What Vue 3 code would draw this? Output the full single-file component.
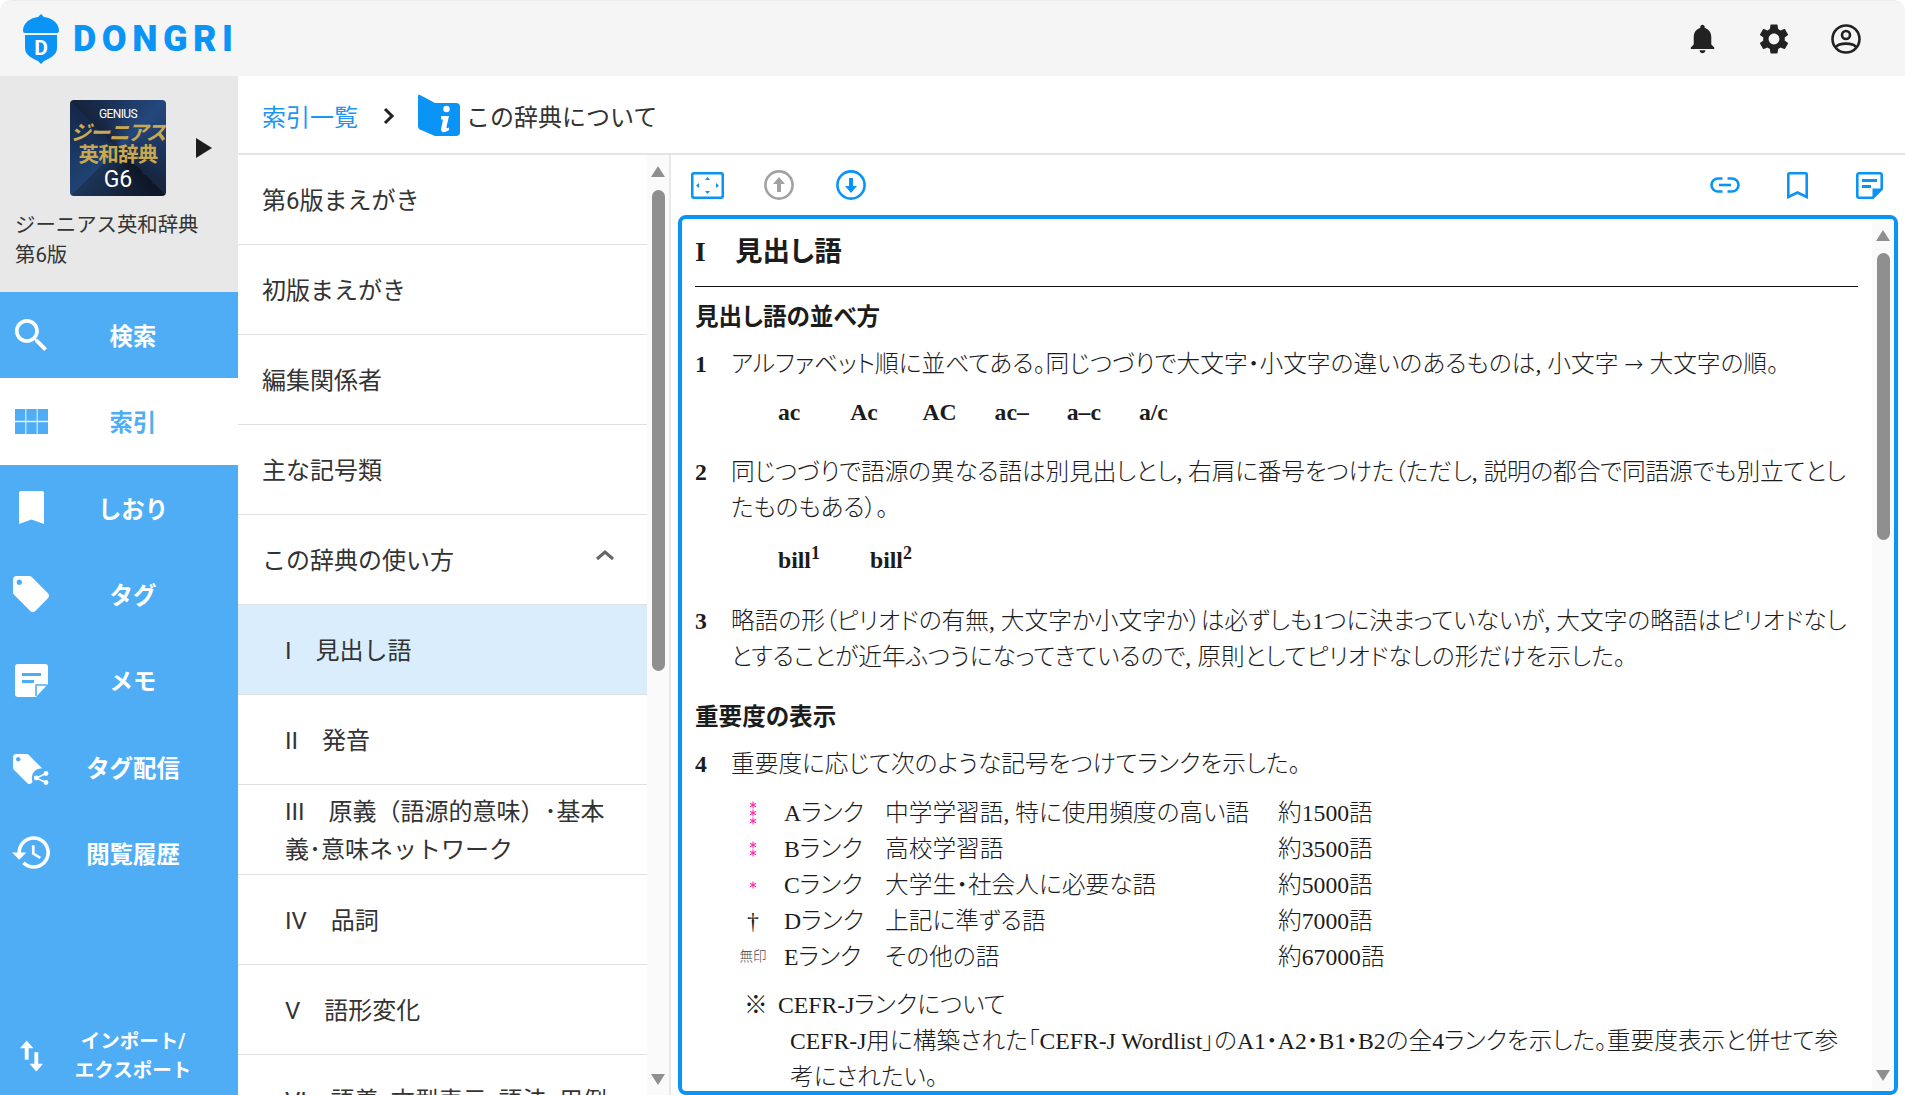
<template>
  <div class="app">
    <header class="topbar">
      <div class="logo">
        <svg class="logo-mark" viewBox="0 0 38 50">
          <path d="M1 17C1 8 9 4 16 3L19 0L22 3C29 4 37 8 37 17Q37 19 35 19H3Q1 19 1 17Z" />
          <path d="M3 21H35V34C35 42 26 45 22 47L19 50L16 47C12 45 3 42 3 34Z" />
          <text x="19" y="41" text-anchor="middle" class="logo-d">D</text>
        </svg>
        <span class="logo-text">DONGRI</span>
      </div>
      <div class="top-icons">
        <button class="top-btn">
          <svg class="bell" viewBox="3.5 2 17 20.5"><path d="M12 22c1.1 0 2-.9 2-2h-4c0 1.1.89 2 2 2zm6-6v-5c0-3.07-1.64-5.64-4.5-6.32V4c0-.83-.67-1.5-1.5-1.5s-1.5.67-1.5 1.5v.68C7.63 5.36 6 7.92 6 11v5l-2 2v1h16v-1l-2-2z" /></svg>
        </button>
        <button class="top-btn">
          <svg viewBox="2 2 20 20"><path d="M19.14 12.94c.04-.3.06-.61.06-.94 0-.32-.02-.64-.07-.94l2.03-1.58c.18-.14.23-.41.12-.61l-1.92-3.32c-.12-.22-.37-.29-.59-.22l-2.39.96c-.5-.38-1.03-.7-1.62-.94l-.36-2.54c-.04-.24-.24-.41-.48-.41h-3.84c-.24 0-.43.17-.47.41l-.36 2.54c-.59.24-1.13.57-1.62.94l-2.39-.96c-.22-.08-.47 0-.59.22L2.74 8.87c-.12.21-.08.47.12.61l2.03 1.58c-.05.3-.09.63-.09.94s.02.64.07.94l-2.03 1.58c-.18.14-.23.41-.12.61l1.92 3.32c.12.22.37.29.59.22l2.39-.96c.5.38 1.03.7 1.62.94l.36 2.54c.05.24.24.41.48.41h3.84c.24 0 .44-.17.47-.41l.36-2.54c.59-.24 1.13-.56 1.62-.94l2.39.96c.22.08.47 0 .59-.22l1.92-3.32c.12-.22.07-.47-.12-.61l-2.01-1.58zM12 15.6c-1.98 0-3.6-1.62-3.6-3.6s1.62-3.6 3.6-3.6 3.6 1.62 3.6 3.6-1.62 3.6-3.6 3.6z" /></svg>
        </button>
        <button class="top-btn">
          <svg viewBox="0 0 30 30" class="line-icon">
            <circle cx="15" cy="15" r="13.5" />
            <circle cx="15" cy="11" r="4" />
            <path d="M5 23C8 18.5 22 18.5 25 23" />
          </svg>
        </button>
      </div>
    </header>

    <div class="body">
      <aside class="sidebar">
        <div class="book">
          <div class="book-top">
            <div class="cover">
              <span class="cover-en">GENIUS</span>
              <span class="cover-ja slant">ジーニアス</span>
              <span class="cover-ja">英和辞典</span>
              <span class="cover-g6">G6</span>
            </div>
            <span class="book-arrow"></span>
          </div>
          <p class="book-name">ジーニアス英和辞典<br />第6版</p>
        </div>

        <nav class="nav">
          <a class="nav-item">
            <svg class="nav-icon search" viewBox="3 3 18 18"><path d="M15.5 14h-.79l-.28-.27C15.41 12.59 16 11.11 16 9.5 16 5.91 13.09 3 9.5 3S3 5.91 3 9.5 5.91 16 9.5 16c1.61 0 3.09-.59 4.23-1.57l.27.28v.79l5 4.99L20.49 19l-4.99-5zm-6 0C7.01 14 5 11.99 5 9.5S7.01 5 9.5 5 14 7.01 14 9.5 11.99 14 9.5 14z" /></svg>
            <span>検索</span>
          </a>
          <a class="nav-item active">
            <svg class="nav-icon grid" viewBox="0 0 33 25">
              <rect x="0" y="0" width="10.4" height="11.8" />
              <rect x="11.3" y="0" width="10.4" height="11.8" />
              <rect x="22.6" y="0" width="10.4" height="11.8" />
              <rect x="0" y="13.2" width="10.4" height="11.8" />
              <rect x="11.3" y="13.2" width="10.4" height="11.8" />
              <rect x="22.6" y="13.2" width="10.4" height="11.8" />
            </svg>
            <span>索引</span>
          </a>
          <a class="nav-item">
            <svg class="nav-icon mark" viewBox="0 0 25 33"><path d="M2 0H23a2 2 0 0 1 2 2V33L12.5 28.5L0 33V2a2 2 0 0 1 2-2Z" /></svg>
            <span>しおり</span>
          </a>
          <a class="nav-item">
            <svg class="nav-icon tag" viewBox="2 2 20 20"><path d="M21.41 11.58l-9-9C12.05 2.22 11.55 2 11 2H4c-1.1 0-2 .9-2 2v7c0 .55.22 1.05.59 1.42l9 9c.36.36.86.58 1.41.58.55 0 1.05-.22 1.41-.59l7-7c.37-.36.59-.86.59-1.41 0-.55-.23-1.06-.59-1.42zM5.5 7C4.67 7 4 6.33 4 5.5S4.67 4 5.5 4 7 4.67 7 5.5 6.33 7 5.5 7z" /></svg>
            <span>タグ</span>
          </a>
          <a class="nav-item">
            <svg class="nav-icon memo" viewBox="0 0 33 33">
              <path d="M3 0H30a3 3 0 0 1 3 3V20L21 33H3a3 3 0 0 1-3-3V3a3 3 0 0 1 3-3Z" />
              <rect class="cut" x="7" y="9" width="19" height="3" />
              <rect class="cut" x="7" y="16" width="12" height="3" />
              <path class="fold" d="M21 32V21H32" />
            </svg>
            <span>メモ</span>
          </a>
          <a class="nav-item">
            <svg class="nav-icon tagshare" viewBox="2 2 24 22">
              <path d="M21.41 11.58l-9-9C12.05 2.22 11.55 2 11 2H4c-1.1 0-2 .9-2 2v7c0 .55.22 1.05.59 1.42l9 9c.36.36.86.58 1.41.58.55 0 1.05-.22 1.41-.59l7-7c.37-.36.59-.86.59-1.41 0-.55-.23-1.06-.59-1.42zM5.5 7C4.67 7 4 6.33 4 5.5S4.67 4 5.5 4 7 4.67 7 5.5 6.33 7 5.5 7z" />
              <circle class="cut" cx="21" cy="18" r="6.5" />
              <circle cx="17.5" cy="18" r="1.6" />
              <circle cx="24" cy="15" r="1.6" />
              <circle cx="24" cy="21" r="1.6" />
              <path class="share" d="M24 15L17.5 18L24 21" />
            </svg>
            <span>タグ配信</span>
          </a>
          <a class="nav-item">
            <svg class="nav-icon hist" viewBox="1 3 21 18"><path d="M13 3c-4.97 0-9 4.03-9 9H1l3.89 3.89.07.14L9 12H6c0-3.87 3.13-7 7-7s7 3.13 7 7-3.13 7-7 7c-1.93 0-3.68-.79-4.94-2.06l-1.42 1.42C8.27 19.99 10.51 21 13 21c4.97 0 9-4.03 9-9s-4.03-9-9-9zm-1 5v5l4.28 2.54.72-1.21-3.5-2.08V8H12z" /></svg>
            <span>閲覧履歴</span>
          </a>
          <a class="nav-item bottom">
            <svg class="nav-icon swap" viewBox="0 0 26 32">
              <path d="M8 0L15 8H10V20H6V8H1Z" />
              <path d="M18 32L25 24H20V12H16V24H11Z" />
            </svg>
            <span>インポート/<br />エクスポート</span>
          </a>
        </nav>
      </aside>

      <main class="main">
        <div class="crumbs">
          <a class="crumb-link">索引一覧</a>
          <svg class="crumb-sep" viewBox="0 0 12 18"><path d="M2 2L9 9L2 16" /></svg>
          <svg class="crumb-icon" viewBox="0 0 42 42">
            <path d="M0 2Q0 0 2 1L17 9V42L3 36Q0 35 0 32Z" />
            <path d="M17 9H38a4 4 0 0 1 4 4V38a4 4 0 0 1-4 4H17Z" />
            <circle class="white" cx="28.5" cy="15" r="3.2" />
            <path class="white" d="M23 22H31L28.5 33Q28 35 31 33.5V36Q25 40 23.5 37Q22.8 36 23.3 34L25 25.5H23Z" />
          </svg>
          <span class="crumb-now">この辞典について</span>
        </div>

        <div class="panes">
          <section class="list-pane">
            <ul class="rows">
              <li
                v-for="row in rows"
                :key="row.label"
                class="row"
                :class="{ sub: row.sub, selected: row.selected, open: row.open, single: row.single }"
              >
                <span>{{ row.label }}</span>
                <svg v-if="row.open" class="chev" viewBox="0 0 20 12"><path d="M2 10L10 3L18 10" /></svg>
              </li>
            </ul>
            <div class="sbar">
              <span class="sbar-up"></span>
              <span class="sbar-thumb list-thumb"></span>
              <span class="sbar-down"></span>
            </div>
          </section>

          <section class="doc-pane">
            <div class="tools">
              <button class="tool">
                <svg class="w33" viewBox="0 0 33 27">
                  <rect class="stroke" x="1.2" y="1.2" width="30.6" height="24.6" rx="2" />
                  <path class="fill" d="M16.5 5L19 8H14ZM16.5 22L14 19H19ZM5 13.5L8 11V16ZM28 13.5L25 16V11Z" />
                </svg>
              </button>
              <button class="tool">
                <svg class="w30" viewBox="0 0 30 30">
                  <circle class="stroke gray" cx="15" cy="15" r="13.6" />
                  <path class="fill gray" d="M15 7L21 14H17V22H13V14H9Z" />
                </svg>
              </button>
              <button class="tool">
                <svg class="w30" viewBox="0 0 30 30">
                  <circle class="stroke" cx="15" cy="15" r="13.6" />
                  <path class="fill" d="M15 23L9 16H13V8H17V16H21Z" />
                </svg>
              </button>
              <div class="tools-gap"></div>
              <button class="tool">
                <svg class="w30" viewBox="0 0 30 16">
                  <path class="stroke" d="M12.5 1.5H8a6.5 6.5 0 0 0 0 13H12.5" />
                  <path class="stroke" d="M17.5 1.5H22a6.5 6.5 0 0 1 0 13H17.5" />
                  <path class="stroke" d="M9 8H21" />
                </svg>
              </button>
              <button class="tool">
                <svg class="w21" viewBox="0 0 21 27">
                  <path class="stroke" d="M1.3 2.3a1 1 0 0 1 1-1H18.7a1 1 0 0 1 1 1V25L10.5 20.5L1.3 25Z" />
                </svg>
              </button>
              <button class="tool">
                <svg class="w27" viewBox="0 0 27 27">
                  <path class="stroke" d="M1.3 3a1.7 1.7 0 0 1 1.7-1.7H24a1.7 1.7 0 0 1 1.7 1.7V17L17 25.7H3a1.7 1.7 0 0 1-1.7-1.7Z" />
                  <rect class="fill" x="6" y="7" width="15" height="3" />
                  <rect class="fill" x="6" y="13" width="9" height="3" />
                  <path class="fill" d="M16.5 16.5H26.5L16.5 26.5Z" />
                </svg>
              </button>
            </div>

            <div class="frame">
              <article class="doc">
                <h1 class="doc-title"><b class="latin">I</b><span>見出し語</span></h1>

                <h2 class="doc-h2">見出し語の並べ方</h2>
                <div class="para first"><b class="num">1</b><p>アルファベット順に並べてある。同じつづりで大文字・小文字の違いのあるものは, 小文字 <span class="arrow">→</span> 大文字の順。</p></div>
                <div class="samples">
                  <b>ac</b><b>Ac</b><b>AC</b><b>ac–</b><b>a–c</b><b>a/c</b>
                </div>
                <div class="para second"><b class="num">2</b><p class="tight">同じつづりで語源の異なる語は別見出しとし, 右肩に番号をつけた（ただし, 説明の都合で同語源でも別立てとし<br />たものもある）。</p></div>
                <div class="bills">
                  <b>bill<sup>1</sup></b><b>bill<sup>2</sup></b>
                </div>
                <div class="para third"><b class="num">3</b><p>略語の形（ピリオドの有無, 大文字か小文字か）は必ずしも1つに決まっていないが, 大文字の略語はピリオドなし<br />とすることが近年ふつうになってきているので, 原則としてピリオドなしの形だけを示した。</p></div>

                <h2 class="doc-h2 lower">重要度の表示</h2>
                <div class="para fourth"><b class="num">4</b><p>重要度に応じて次のような記号をつけてランクを示した。</p></div>
                <div class="ranks">
                  <div v-for="r in ranks" :key="r.name" class="rank">
                    <span class="rank-mark">
                      <svg v-for="n in r.stars" :key="n" class="star" viewBox="0 0 8 8">
                        <path d="M4 .5V7.5M1 2.2L7 5.8M7 2.2L1 5.8" />
                      </svg>
                      <span v-if="r.mark" :class="r.small ? 'mark-small' : ''">{{ r.mark }}</span>
                    </span>
                    <span>{{ r.name }}</span>
                    <span>{{ r.desc }}</span>
                    <span>{{ r.count }}</span>
                  </div>
                </div>
                <div class="note">
                  <p><span class="note-mark">※</span>CEFR-Jランクについて</p>
                  <p class="note-body">CEFR-J用に構築された「CEFR-J Wordlist」のA1・A2・B1・B2の全4ランクを示した。重要度表示と併せて参<br />考にされたい。</p>
                </div>
              </article>
              <div class="sbar doc-sbar">
                <span class="sbar-up"></span>
                <span class="sbar-thumb doc-thumb"></span>
                <span class="sbar-down"></span>
              </div>
            </div>
          </section>
        </div>
      </main>
    </div>
  </div>
</template>

<script setup>
const rows = [
  { label: '第6版まえがき' },
  { label: '初版まえがき' },
  { label: '編集関係者' },
  { label: '主な記号類' },
  { label: 'この辞典の使い方', open: true },
  { label: 'I　見出し語', sub: true, selected: true },
  { label: 'II　発音', sub: true },
  { label: 'III　原義（語源的意味）･基本義･意味ネットワーク', sub: true },
  { label: 'IV　品詞', sub: true },
  { label: 'V　語形変化', sub: true },
  { label: 'VI　語義･文型表示･語法･用例', sub: true, single: true }
]

const ranks = [
  { stars: 3, name: 'Aランク', desc: '中学学習語, 特に使用頻度の高い語', count: '約1500語' },
  { stars: 2, name: 'Bランク', desc: '高校学習語', count: '約3500語' },
  { stars: 1, name: 'Cランク', desc: '大学生・社会人に必要な語', count: '約5000語' },
  { stars: 0, mark: '†', name: 'Dランク', desc: '上記に準ずる語', count: '約7000語' },
  { stars: 0, mark: '無印', small: true, name: 'Eランク', desc: 'その他の語', count: '約67000語' }
]
</script>

<style>
html,
body {
  margin: 0;
  background: #fff;
}
</style>

<style scoped>
.app {
  width: 1905px;
  height: 1095px;
  overflow: hidden;
  display: flex;
  flex-direction: column;
  font-family: Roboto, "Noto Sans CJK JP", sans-serif;
  color: #333;
}

/* top bar */
.topbar {
  height: 76px;
  flex: none;
  box-sizing: border-box;
  background: #f5f5f5;
  border-top: 1px solid #ececec;
  border-radius: 12px 12px 0 0;
  display: flex;
  align-items: center;
  justify-content: space-between;
}

.logo {
  display: flex;
  align-items: center;
  padding-left: 22px;
  gap: 13px;
}

.logo-mark {
  width: 38px;
  height: 50px;
  fill: #0a94f5;
}

.logo-d {
  fill: #fff;
  font: 700 21px Roboto, sans-serif;
}

.logo-text {
  font: 900 36px Roboto, sans-serif;
  letter-spacing: 5.5px;
  color: #0a94f5;
}

.top-icons {
  display: flex;
  padding-right: 23px;
}

.top-btn {
  width: 72px;
  height: 72px;
  padding: 0;
  border: 0;
  background: none;
  display: flex;
  align-items: center;
  justify-content: center;
}

.top-btn svg {
  width: 30px;
  height: 30px;
  fill: #222;
}

.top-btn svg.bell {
  width: 25px;
  height: 30px;
}

.top-btn svg.line-icon {
  fill: none;
  stroke: #222;
  stroke-width: 2.6;
}

.body {
  flex: 1;
  min-height: 0;
  display: flex;
}

/* left sidebar */
.sidebar {
  width: 238px;
  flex: none;
  display: flex;
  flex-direction: column;
  background: #4fadf6;
}

.book {
  height: 216px;
  flex: none;
  background: #e8e8e8;
  box-sizing: border-box;
  padding-top: 24px;
}

.book-top {
  display: flex;
  align-items: center;
  padding-left: 70px;
  gap: 30px;
}

.cover {
  width: 96px;
  height: 96px;
  border-radius: 4px;
  display: flex;
  flex-direction: column;
  align-items: center;
  overflow: hidden;
  white-space: nowrap;
  color: #fff;
  background: conic-gradient(from 45deg, #24477c, #16243f 25%, #0e1626 25%, #1d3558 50%, #1f4374 50%, #16284a 75%, #16233c 75%, #24477c);
}

.cover-en {
  font-size: 12px;
  line-height: 14px;
  margin-top: 7px;
  margin-bottom: 1px;
  letter-spacing: -0.6px;
}

.cover-ja {
  font-weight: 700;
  font-size: 20.5px;
  line-height: 22px;
  color: #c9a84f;
  letter-spacing: -0.8px;
  font-feature-settings: "palt";
}

.cover-ja.slant {
  font-style: italic;
}

.cover-g6 {
  font-size: 23px;
  line-height: 26px;
  margin-top: 1px;
}

.book-arrow {
  width: 0;
  height: 0;
  border-left: 16px solid #1c1c1c;
  border-top: 10px solid transparent;
  border-bottom: 10px solid transparent;
}

.book-name {
  margin: 14px 0 0 15px;
  font-size: 20.4px;
  line-height: 30px;
  color: #333;
}

.nav {
  flex: 1;
  min-height: 0;
  display: flex;
  flex-direction: column;
}

.nav-item {
  height: 86.3px;
  flex: none;
  display: grid;
  grid-template-columns: 62px 1fr;
  align-items: center;
  padding-right: 34px;
  color: #fff;
  font-size: 23.4px;
  font-weight: 700;
  text-align: center;
}

.nav-item.active {
  background: #fff;
  color: #4fadf6;
}

.nav-item.bottom {
  margin-top: auto;
  height: 78px;
  font-size: 19.5px;
  line-height: 29px;
}

.nav-icon {
  justify-self: center;
  fill: #fff;
}

.search {
  width: 33px;
  height: 33px;
}

.grid {
  width: 33px;
  height: 25px;
  fill: #4fadf6;
}

.mark {
  width: 25px;
  height: 33px;
}

.tag {
  width: 36px;
  height: 36px;
}

.memo {
  width: 33px;
  height: 33px;
}

.memo .cut {
  fill: #4fadf6;
}

.memo .fold {
  fill: none;
  stroke: #4fadf6;
  stroke-width: 1.6;
}

.tagshare {
  width: 36px;
  height: 33px;
  margin-top: 8px;
}

.tagshare .cut {
  fill: #4fadf6;
}

.tagshare .share {
  fill: none;
  stroke: #fff;
  stroke-width: 1;
}

.hist {
  width: 38px;
  height: 33px;
}

.swap {
  width: 25px;
  height: 32px;
}

/* main area */
.main {
  flex: 1;
  min-width: 0;
  display: flex;
  flex-direction: column;
}

.crumbs {
  height: 79px;
  flex: none;
  box-sizing: border-box;
  border-bottom: 2px solid #e4e4e4;
  display: flex;
  align-items: center;
  padding: 2px 0 0 24px;
  font-size: 24px;
}

.crumb-link {
  color: #1e96f0;
}

.crumb-sep {
  width: 12px;
  height: 18px;
  margin-left: 25px;
  fill: none;
  stroke: #222;
  stroke-width: 3;
}

.crumb-icon {
  width: 42px;
  height: 42px;
  margin-left: 23px;
  margin-top: -2px;
  fill: #0a94f5;
}

.crumb-icon .white {
  fill: #fff;
}

.crumb-now {
  margin-left: 6px;
  color: #333;
}

.panes {
  flex: 1;
  min-height: 0;
  display: flex;
}

/* list pane */
.list-pane {
  width: 433px;
  flex: none;
  box-sizing: border-box;
  border-right: 2px solid #e8e8e8;
  display: flex;
  min-height: 0;
}

.rows {
  width: 409px;
  flex: none;
  margin: 0;
  padding: 0;
  list-style: none;
  overflow: hidden;
}

.row {
  height: 90px;
  box-sizing: border-box;
  border-bottom: 1px solid #e0e0e0;
  display: flex;
  align-items: center;
  justify-content: space-between;
  padding: 2px 32px 0 24px;
  font-size: 24px;
  line-height: 38px;
  color: #333;
}

.row.sub {
  padding-left: 47px;
  padding-right: 25px;
}

.row.single {
  white-space: nowrap;
}

.row.selected {
  background: #daedfc;
}

.chev {
  width: 20px;
  height: 12px;
  margin-top: -12px;
  fill: none;
  stroke: #666;
  stroke-width: 3;
}

.sbar {
  width: 22px;
  flex: none;
  background: #fafafa;
  display: flex;
  flex-direction: column;
  align-items: center;
}

.sbar-up,
.sbar-down {
  width: 0;
  height: 0;
  border-left: 7.5px solid transparent;
  border-right: 7.5px solid transparent;
}

.sbar-up {
  margin-top: 11px;
  border-bottom: 11px solid #8f8f8f;
}

.sbar-down {
  margin-top: auto;
  margin-bottom: 10px;
  border-top: 11px solid #8f8f8f;
}

.sbar-thumb {
  width: 13px;
  background: #8f8f8f;
  border-radius: 7px;
}

.list-thumb {
  height: 481px;
  margin-top: 13px;
}

.doc-thumb {
  height: 287px;
  margin-top: 12px;
}

/* document pane */
.doc-pane {
  flex: 1;
  min-width: 0;
  display: flex;
  flex-direction: column;
}

.tools {
  height: 60px;
  flex: none;
  display: flex;
}

.tools-gap {
  flex: 1;
}

.tool {
  width: 72px;
  height: 60px;
  padding: 0;
  border: 0;
  background: none;
  display: flex;
  align-items: center;
  justify-content: center;
}

.tool .stroke {
  fill: none;
  stroke: #0a94f5;
  stroke-width: 2.6;
}

.tool .fill {
  fill: #0a94f5;
}

.tool .stroke.gray {
  stroke: #a2a2a2;
}

.tool .fill.gray {
  fill: #a2a2a2;
}

.w33 {
  width: 33px;
  height: 27px;
}

.w30 {
  width: 30px;
  height: 30px;
}

.w21 {
  width: 21px;
  height: 27px;
}

.w27 {
  width: 27px;
  height: 27px;
}

.frame {
  flex: 1;
  min-height: 0;
  margin: 0 7px;
  box-sizing: border-box;
  border: 4px solid #0a94f5;
  border-radius: 8px;
  display: flex;
  overflow: hidden;
}

.doc {
  flex: 1;
  min-width: 0;
  box-sizing: border-box;
  padding: 13px 14px 0 13px;
  overflow: hidden;
  font-family: "Liberation Serif", "Noto Sans CJK JP", serif;
  font-size: 23.7px;
  line-height: 36px;
  font-weight: 300;
  color: #1c1c1c;
  font-feature-settings: "palt";
  white-space: nowrap;
}

.doc p {
  margin: 0;
}

.doc .tight {
  letter-spacing: -0.16px;
}

.doc-title {
  margin: 0;
  padding-bottom: 14px;
  border-bottom: 1px solid #111;
  font-size: 27.5px;
  line-height: 40px;
  font-weight: 700;
  display: flex;
}

.latin {
  width: 40px;
}

.doc-h2 {
  margin: 12px 0 0;
  font-size: 23.6px;
  line-height: 36px;
  font-weight: 700;
}

.doc-h2.lower {
  margin-top: 24px;
}

.para {
  display: flex;
}

.num {
  width: 36px;
  flex: none;
  font-weight: 700;
}

.arrow {
  font-family: "DejaVu Sans", sans-serif;
  font-size: 23px;
}

.first {
  margin-top: 11px;
}

.second {
  margin-top: 24px;
}

.third {
  margin-top: 25px;
}

.fourth {
  margin-top: 11px;
}

.samples {
  display: flex;
  margin: 12px 0 0 83px;
}

.samples b,
.bills b {
  font-weight: 700;
}

.samples b {
  width: 72.2px;
}

.bills {
  display: flex;
  margin: 16px 0 0 83px;
}

.bills b {
  width: 92px;
}

.bills sup {
  font-size: 18px;
  line-height: 0;
}

.ranks {
  margin: 13px 0 0 40px;
}

.rank {
  display: grid;
  grid-template-columns: 49px 101px 393px auto;
}

.rank-mark {
  display: flex;
  flex-direction: column;
  align-items: center;
  justify-content: center;
  padding-right: 13px;
  height: 36px;
  line-height: 36px;
  white-space: nowrap;
}

.star {
  width: 8px;
  height: 8px;
  fill: none;
  stroke: #ff2aa8;
  stroke-width: 1.1;
}

.mark-small {
  font-size: 13.5px;
  color: #444;
}

.note {
  margin: 12px 0 0 49px;
}

.note-mark {
  display: inline-block;
  width: 34px;
}

.note .note-body {
  margin-left: 46px;
}

.doc-sbar {
  width: 22px;
}
</style>
